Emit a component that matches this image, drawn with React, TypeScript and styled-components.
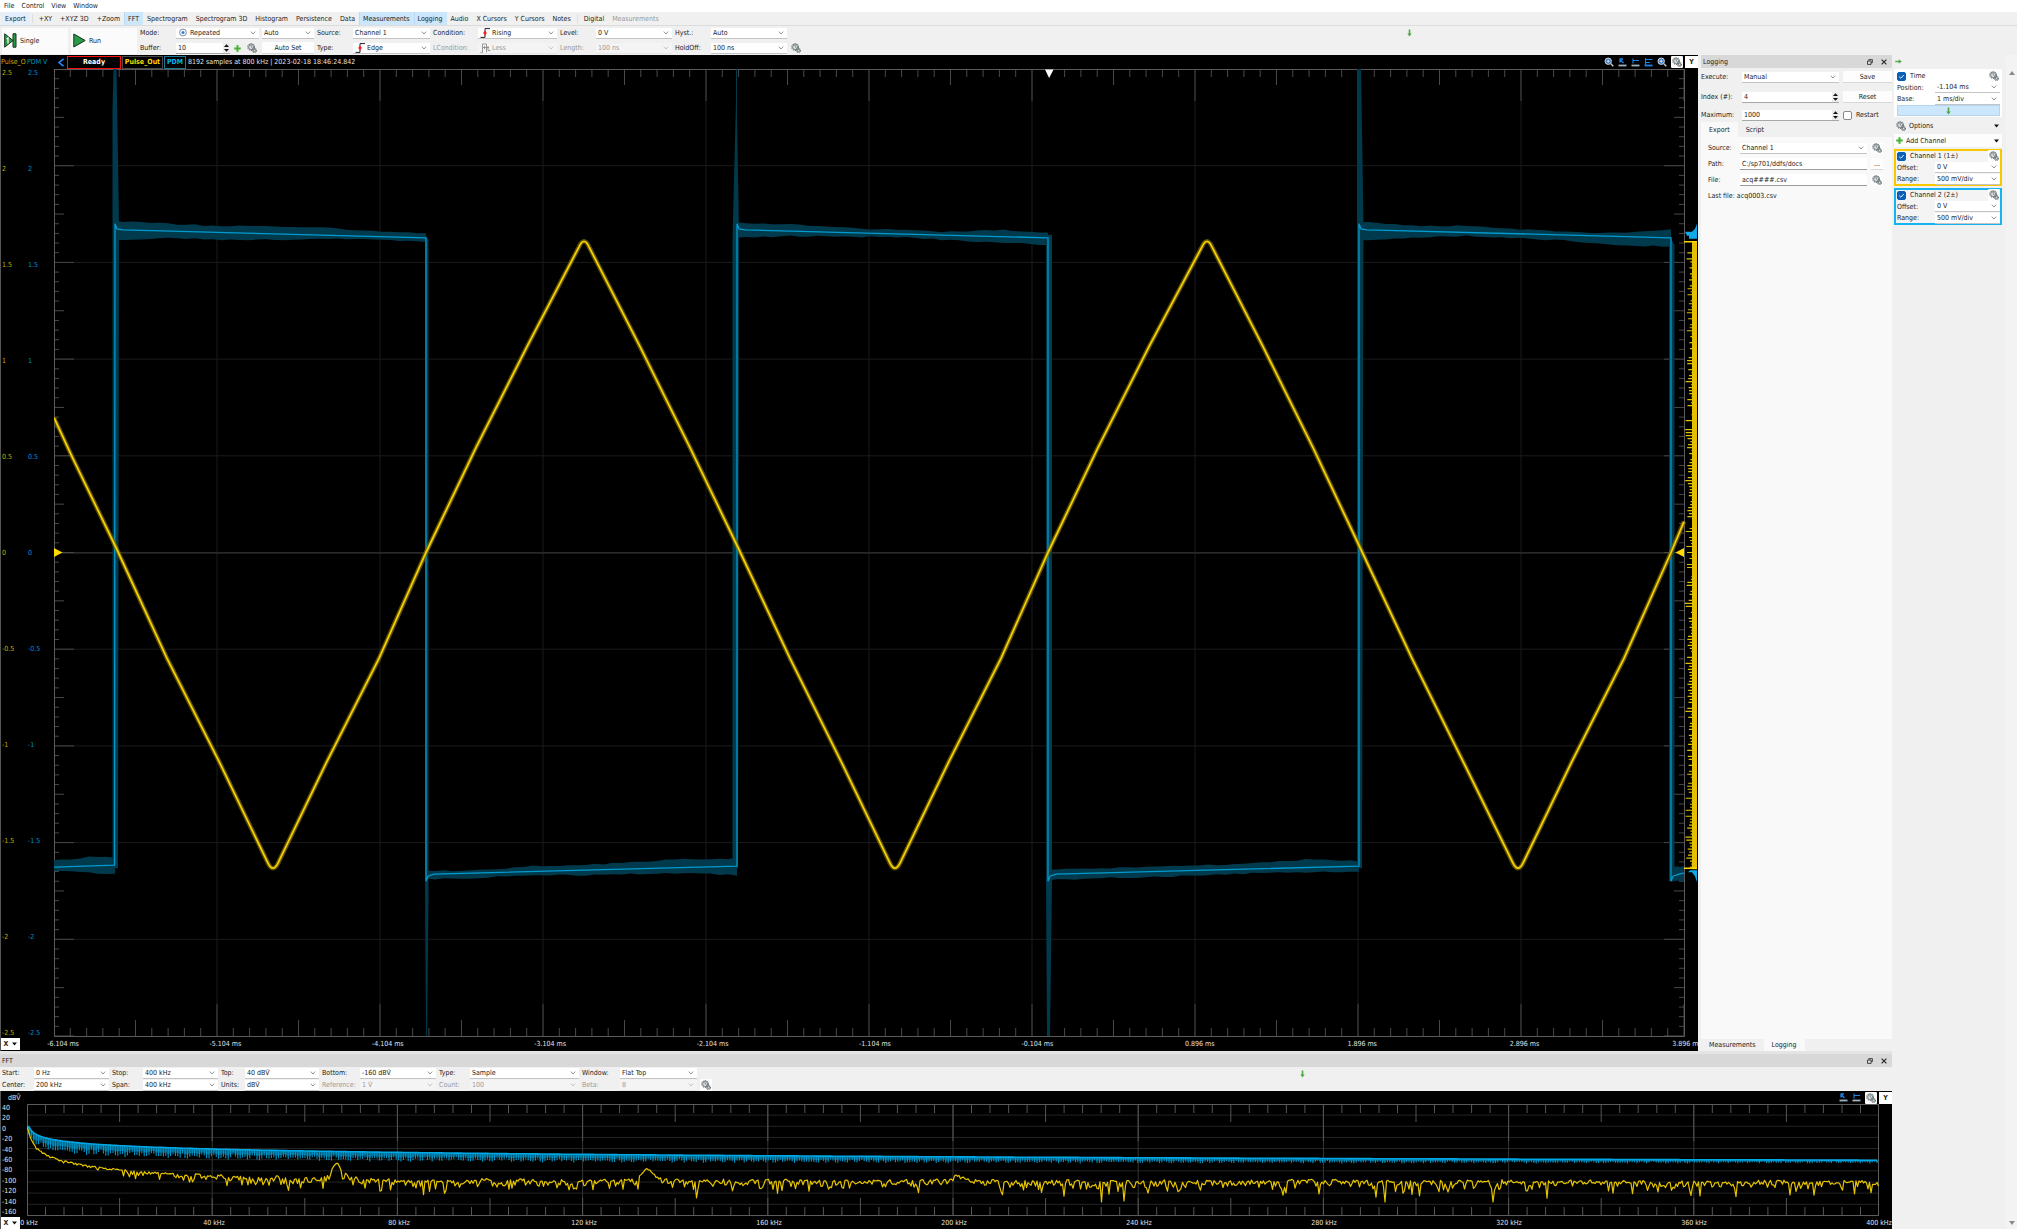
import React from "react";
import styled, { createGlobalStyle } from "styled-components";

const YELLOW = "#ffd800";
const BLUE = "#00b4f0";

const Global = createGlobalStyle`
  *, *::before, *::after { box-sizing: border-box; }
  html, body { margin: 0; padding: 0; }
  body, button, input, select, textarea {
    font-family: "DejaVu Sans Condensed", "Open Sans", "Noto Sans", sans-serif;
    font-size: 7px;
    line-height: 8px;
    color: #1c1c1c;
  }
  button, input, select { margin: 0; padding: 0; border: 0; border-radius: 0; background: none; outline: none; }
  a { color: inherit; text-decoration: none; }
`;

/* ---------- shared parts ---------- */

const Page = styled.div`
  display: flex;
  flex-direction: column;
  height: 100vh;
  overflow: hidden;
  background: #f0f0f0;
`;

const SelectBox = styled.span<{ $off?: boolean }>`
  display: grid;
  grid-template-columns: auto minmax(0, 1fr) 12px;
  align-items: center;
  height: 11px;
  min-width: 0;
  padding-left: 2px;
  background: ${(p) => (p.$off ? "#f4f4f4" : "#fff")};
  border-bottom: 1px solid ${(p) => (p.$off ? "#e6e6e6" : "#c4c4c4")};
  & > select {
    grid-column: 2 / 4;
    grid-row: 1;
    width: 100%;
    height: 10px;
    appearance: none;
    color: ${(p) => (p.$off ? "#9a9a9a" : "#1c1c1c")};
    opacity: 1;
  }
  & > svg:last-child {
    grid-column: 3;
    grid-row: 1;
    justify-self: center;
    pointer-events: none;
  }
`;

const Label = styled.label<{ $off?: boolean }>`
  color: ${(p) => (p.$off ? "#9a9a9a" : "#1c1c1c")};
  white-space: nowrap;
`;

function Picker(p: { id: string; value: string; off?: boolean; icon?: React.ReactNode }) {
  return (
    <SelectBox $off={p.off}>
      {p.icon}
      <select id={p.id} disabled={p.off} defaultValue={p.value} aria-label={p.id}>
        <option>{p.value}</option>
      </select>
      <svg width="6" height="4" viewBox="0 0 6 4" fill="none" stroke={p.off ? "#b8b8b8" : "#777"} strokeWidth="0.8">
        <path d="M.8.6 3 3 5.2.6" />
      </svg>
    </SelectBox>
  );
}

const SpinBox = styled.span`
  display: flex;
  align-items: center;
  height: 11px;
  min-width: 0;
  padding-left: 2px;
  background: #fff;
  border-bottom: 1px solid #a8a8a8;
  & > input {
    flex: 1;
    min-width: 0;
    height: 10px;
    appearance: textfield;
  }
  & > input::-webkit-inner-spin-button { appearance: none; margin: 0; }
`;

const Stepper = styled.svg`
  flex: none;
  background: #ececec;
`;

function Spin({ id, value }: { id: string; value: number }) {
  return (
    <SpinBox>
      <input id={id} type="number" defaultValue={value} aria-label={id} />
      <Stepper width="7" height="10" viewBox="0 0 7 10" fill="#111">
        <path d="M1 4 3.5 1.2 6 4zM1 6 3.5 8.8 6 6z" />
      </Stepper>
    </SpinBox>
  );
}

const PlainButton = styled.button`
  display: flex;
  align-items: center;
  justify-content: center;
  height: 12px;
  background: #fdfdfd;
  border-bottom: 1px solid #d8d8d8;
`;

const GearButton = styled.button<{ $plain?: boolean }>`
  display: flex;
  align-items: center;
  justify-content: center;
  flex: none;
  width: 12px;
  height: 12px;
  background: ${(p) => (p.$plain ? "none" : "#fdfdfd")};
  border-radius: 1px;
`;

function Gear({ size = 10 }: { size?: number }) {
  return (
    <svg width={size} height={size} viewBox="0 0 12 12" fill="none">
      <circle cx="5" cy="4.8" r="3.9" stroke="#6d7678" strokeWidth="1.6" strokeDasharray="1.5 .95" />
      <circle cx="5" cy="4.8" r="3" stroke="#7d8689" strokeWidth="1.2" fill="#dfe5e6" />
      <path d="M5 4.8V2.4M5 4.8l2 1.4" stroke="#596164" strokeWidth=".8" />
      <circle cx="9" cy="9" r="2.2" stroke="#4a5255" strokeWidth="1.3" strokeDasharray="1.1 .6" />
      <circle cx="9" cy="9" r="1.4" fill="#d5dbdc" stroke="#5d6669" strokeWidth=".8" />
    </svg>
  );
}

function GearBtn({ label, plain }: { label: string; plain?: boolean }) {
  return (
    <GearButton aria-label={label} $plain={plain}>
      <Gear />
    </GearButton>
  );
}

const Plus = () => (
  <svg width="7" height="7" viewBox="0 0 7 7">
    <path d="M2.5.3h2v2.2h2.2v2H4.5v2.2h-2V4.5H.3v-2h2.2z" fill="#46b035" stroke="#8ed07f" strokeWidth=".4" />
  </svg>
);

const DownArrow = () => (
  <svg width="5" height="8" viewBox="0 0 5 8">
    <path d="M1.7.5h1.6v4h1.4L2.5 7.5.3 4.5h1.4z" fill="#4fa848" />
  </svg>
);

const Caret = () => (
  <svg width="5" height="4" viewBox="0 0 5 4">
    <path d="M0 .5h5L2.5 3.6z" fill="#111" />
  </svg>
);

const DockTitle = styled.header`
  display: flex;
  align-items: center;
  gap: 6px;
  flex: none;
  height: 13px;
  padding: 0 4px 0 2px;
  background: #d8d8d8;
  & > span { flex: 1; }
  & > button { display: flex; align-items: center; justify-content: center; width: 8px; height: 8px; }
`;

function Dock({ title }: { title: string }) {
  return (
    <DockTitle>
      <span>{title}</span>
      <button aria-label={`Float ${title}`}>
        <svg width="6" height="6" viewBox="0 0 6 6" fill="none" stroke="#222" strokeWidth=".8">
          <path d="M1.8 1.8V.6h3.6v3H4.2M.5 2h3.6v3.4H.5z" />
        </svg>
      </button>
      <button aria-label={`Close ${title}`}>
        <svg width="6" height="6" viewBox="0 0 6 6" stroke="#222" strokeWidth="1.1">
          <path d="M.6.6l4.8 4.8M5.4.6.6 5.4" />
        </svg>
      </button>
    </DockTitle>
  );
}

/* ---------- menus and top toolbar ---------- */

const MenuBar = styled.nav`
  display: flex;
  align-items: center;
  gap: 7px;
  flex: none;
  height: 12px;
  padding-left: 4px;
  background: #fff;
`;

const ViewBar = styled.div`
  display: flex;
  align-items: stretch;
  flex: none;
  height: 14px;
  padding-left: 1px;
  border-bottom: 1px solid #dcdcdc;
`;

const ViewButton = styled.button<{ $on?: boolean; $hint?: boolean; $off?: boolean }>`
  padding: 0 4px;
  white-space: nowrap;
  background: ${(p) => (p.$on ? "#cce6fb" : p.$hint ? "#e3f0fb" : "none")};
  color: ${(p) => (p.$off ? "#9a9a9a" : "#1c1c1c")};
  box-shadow: inset ${(p) => (p.$on ? 1 : 0)}px 0 #b9daf4;
`;

const Divider = styled.i`
  width: 1px;
  margin: 2px 2px;
  background: #dedede;
`;

const ControlBar = styled.div`
  display: flex;
  align-items: center;
  flex: none;
  height: 29px;
  padding: 0 0 0 2px;
`;

const BigButton = styled.button`
  display: flex;
  align-items: center;
  gap: 3px;
  width: 66px;
  height: 26px;
  margin-right: 3px;
  padding: 0 2px;
  background: #fbfbfb;
`;

const Settings = styled.div<{ $cols: string; $row: number }>`
  display: grid;
  grid-template-columns: ${(p) => p.$cols};
  grid-auto-rows: ${(p) => p.$row}px;
  align-items: center;
  flex: none;
  column-gap: 3px;
`;

const BufferCell = styled.div`
  display: grid;
  grid-template-columns: 54px 1fr 1fr;
  align-items: center;
  justify-items: center;
  & > :first-child { width: 100%; }
`;

const BarHint = styled.div`
  display: flex;
  flex: 1;
  justify-content: center;
  align-self: flex-start;
  padding-top: 3px;
`;

const RepeatIcon = () => (
  <svg width="12" height="9" viewBox="0 0 12 9" fill="none">
    <circle cx="5" cy="4.5" r="3.4" stroke="#6b7f96" strokeWidth=".9" />
    <circle cx="5" cy="4.5" r="1.6" fill="#3f7fd0" />
  </svg>
);

const EdgeIcon = () => (
  <svg width="12" height="10" viewBox="0 0 12 10" fill="none">
    <path d="M.5 9.4H5V.6h5" stroke="#222" strokeWidth="1" />
    <path d="M5 2.5 7.2 5.6H2.8z" fill="#ff1a1a" />
    <path d="M5 5v2.5" stroke="#ff1a1a" strokeWidth="1.2" />
  </svg>
);

const PulseIcon = () => (
  <svg width="12" height="10" viewBox="0 0 12 10" fill="none" stroke="#8f8f8f" strokeWidth=".9">
    <path d="M.5 9.400H2.500V1h4v8.400M3 4.500h6M4.500 3v3M8 3v4.500h2.500" />
  </svg>
);

const VIEWS: { name: string; on?: boolean; hint?: boolean; off?: boolean; bar?: boolean }[] = [
  { name: "Export", hint: true },
  { name: "+XY", bar: true },
  { name: "+XYZ 3D" },
  { name: "+Zoom" },
  { name: "FFT", on: true },
  { name: "Spectrogram" },
  { name: "Spectrogram 3D" },
  { name: "Histogram" },
  { name: "Persistence" },
  { name: "Data" },
  { name: "Measurements", on: true },
  { name: "Logging", on: true },
  { name: "Audio" },
  { name: "X Cursors" },
  { name: "Y Cursors" },
  { name: "Notes" },
  { name: "Digital", bar: true },
  { name: "Measurements", off: true },
];

function TopBars() {
  return (
    <>
      <MenuBar>
        {["File", "Control", "View", "Window"].map((m) => (
          <a key={m} href="#">{m}</a>
        ))}
      </MenuBar>
      <ViewBar>
        {VIEWS.map((v, i) => (
          <React.Fragment key={i}>
            {v.bar && <Divider />}
            <ViewButton $on={v.on} $hint={v.hint} $off={v.off} disabled={v.off}>{v.name}</ViewButton>
          </React.Fragment>
        ))}
      </ViewBar>
      <ControlBar>
        <BigButton>
          <svg width="13" height="15" viewBox="0 0 13 15">
            <path d="M.7.8 9 7.500.7 14.200z" fill="#2b9a48" stroke="#14301b" strokeWidth="1" />
            <path d="M9 .8h3v13.400H9z" fill="#2b9a48" stroke="#14301b" strokeWidth="1" />
            <path d="M2.600 6 4 5v5.500" stroke="#fff" strokeWidth="1.200" fill="none" />
          </svg>
          Single
        </BigButton>
        <BigButton>
          <svg width="13" height="15" viewBox="0 0 13 15">
            <path d="M.8 1 12.200 7.500.8 14z" fill="#2b9a48" stroke="#14301b" strokeWidth="1" />
          </svg>
          Run
        </BigButton>
        <Settings $row={15} $cols="33px 83px 52px 33px 77px 42px 79px 33px 76px 33px 76px 12px">
          <Label htmlFor="mode">Mode:</Label>
          <Picker id="mode" value="Repeated" icon={<RepeatIcon />} />
          <Picker id="run-mode" value="Auto" />
          <Label htmlFor="source">Source:</Label>
          <Picker id="source" value="Channel 1" />
          <Label htmlFor="condition">Condition:</Label>
          <Picker id="condition" value="Rising" icon={<EdgeIcon />} />
          <Label htmlFor="level">Level:</Label>
          <Picker id="level" value="0 V" />
          <Label htmlFor="hyst">Hyst.:</Label>
          <Picker id="hyst" value="Auto" />
          <span />
          <Label htmlFor="buffer">Buffer:</Label>
          <BufferCell>
            <Spin id="buffer" value={10} />
            <Plus />
            <GearBtn label="Buffer settings" plain />
          </BufferCell>
          <PlainButton>Auto Set</PlainButton>
          <Label htmlFor="type">Type:</Label>
          <Picker id="type" value="Edge" icon={<EdgeIcon />} />
          <Label htmlFor="lcondition" $off>LCondition:</Label>
          <Picker id="lcondition" value="Less" off icon={<PulseIcon />} />
          <Label htmlFor="length" $off>Length:</Label>
          <Picker id="length" value="100 ns" off />
          <Label htmlFor="holdoff">HoldOff:</Label>
          <Picker id="holdoff" value="100 ns" />
          <GearBtn label="Trigger settings" plain />
        </Settings>
        <BarHint><DownArrow /></BarHint>
      </ControlBar>
    </>
  );
}

/* ---------- scope ---------- */

const Workspace = styled.div`
  display: flex;
  flex: 1;
  min-height: 0;
`;

const Main = styled.main`
  display: flex;
  flex-direction: column;
  flex: 1;
  min-width: 0;
`;

const TopRow = styled.div`
  display: flex;
  flex: 1;
  min-height: 0;
  gap: 3px;
`;

const Scope = styled.section`
  display: grid;
  grid-template-columns: 53px minmax(0, 1fr);
  grid-template-rows: 14px minmax(0, 1fr) 14px;
  flex: 1;
  min-width: 0;
  overflow: hidden;
  background: #000;
  color: #e2e2e2;
  border-left: 1px solid #555;
`;

const AxisNames = styled.div`
  display: grid;
  grid-template-columns: 26px 1fr;
  align-items: center;
  white-space: nowrap;
`;

const Tint = styled.span<{ $c: string }>`
  color: ${(p) => p.$c};
`;

const ScopeHead = styled.div`
  display: flex;
  align-items: center;
  gap: 1px;
  padding-left: 3px;
  white-space: nowrap;
  & > p { margin: 0 auto 0 1px; }
`;

const Tag = styled.span<{ $c: string; $edge: string; $w: number }>`
  display: flex;
  align-items: center;
  justify-content: center;
  width: ${(p) => p.$w}px;
  height: 13px;
  font-weight: 700;
  color: ${(p) => p.$c};
  border: 1px solid ${(p) => p.$edge};
`;

const HeadTools = styled.div`
  display: flex;
  align-items: center;
  gap: 4px;
`;

const AxisButton = styled.button<{ $w: number }>`
  display: flex;
  align-items: center;
  justify-content: center;
  gap: 4px;
  flex: none;
  width: ${(p) => p.$w}px;
  height: 12px;
  font-weight: 700;
  background: #fff;
`;

const ToolPair = styled.div`
  display: flex;
  gap: 2px;
`;

const YLabels = styled.div`
  display: grid;
  grid-template-columns: 26px 1fr;
  & > div {
    display: flex;
    flex-direction: column;
    justify-content: space-between;
    padding-left: 1px;
  }
`;

const Plot = styled.svg`
  display: block;
  width: 100%;
  height: 100%;
`;

const XAxis = styled.div`
  grid-column: 1 / -1;
  display: flex;
  align-items: center;
`;

/* Each label is a zero-width cell, so its text is centred on its division. */
const XTicks = styled.div<{ $from: number; $to: number }>`
  display: flex;
  flex: 1;
  justify-content: space-between;
  margin: 0 ${(p) => p.$to}px 0 ${(p) => p.$from}px;
  white-space: nowrap;
  & > span {
    display: flex;
    justify-content: center;
    width: 0;
  }
`;

const Magnifier = () => (
  <svg width="10" height="10" viewBox="0 0 10 10" fill="none">
    <circle cx="4.2" cy="4.2" r="3.2" fill="#3f78b8" stroke="#c6d6e6" strokeWidth="1" />
    <path d="M6.800 6.800 9.300 9.300" stroke="#c9c9c9" strokeWidth="1.4" />
    <path d="M4.200 2.600v3.200M2.600 4.200h3.200" stroke="#fff" strokeWidth=".7" />
  </svg>
);

const CursorIcon = ({ kind }: { kind: 0 | 1 | 2 }) => (
  <svg width="9" height="9" viewBox="0 0 9 9" fill="none">
    {kind === 0 && <path d="M2 1.500 5.500 5M1.500 1h3.500M2 1v3.500" stroke="#1c83e6" strokeWidth="1.3" />}
    {kind === 1 && <path d="M2 .5v5M2 2.500h6" stroke="#1c83e6" strokeWidth="1.1" />}
    {kind === 2 && <path d="M1.500 0v8M2 1.500h6.500M2 4.500h4" stroke="#1c83e6" strokeWidth="1.1" />}
    <path d="M.5 7.500h8" stroke={kind === 2 ? "#1c83e6" : "#9fb0be"} strokeWidth="1.8" />
  </svg>
);

function makeRandom(seed: number) {
  let s = seed;
  return () => {
    s = (s * 1664525 + 1013904223) % 4294967296;
    return s / 4294967296;
  };
}

const range = (n: number) => Array.from({ length: n }, (_, i) => i);

interface Band { x0: number; x1: number; y0: number; y1: number; top: number[]; bottom: number[] }

const BANDS: Band[] = [
  { x0: 54, x1: 115, y0: 868, y1: 866, top: [861, 860, 857, 859], bottom: [872, 873, 874, 875] },
  { x0: 115, x1: 426, y0: 229, y1: 238, top: [221, 224, 226, 226, 228, 231, 234], bottom: [240, 238, 240, 240, 239, 240, 242] },
  { x0: 426, x1: 737, y0: 876, y1: 867, top: [872, 871, 867, 866, 863, 860, 859], bottom: [880, 879, 876, 876, 875, 874, 876] },
  { x0: 737, x1: 1048, y0: 229, y1: 238, top: [223, 224, 228, 230, 232, 230, 233], bottom: [238, 236, 237, 237, 240, 243, 245] },
  { x0: 1048, x1: 1359, y0: 876, y1: 867, top: [871, 869, 868, 866, 864, 860, 862], bottom: [881, 879, 878, 876, 874, 873, 873] },
  { x0: 1359, x1: 1671, y0: 229, y1: 238, top: [222, 226, 226, 229, 232, 233, 230], bottom: [241, 238, 236, 238, 241, 245, 247] },
  { x0: 1671, x1: 1684, y0: 876, y1: 874, top: [867, 867], bottom: [882, 882] },
];

function bandPath(b: Band, rnd: () => number) {
  const steps = Math.max(4, Math.round((b.x1 - b.x0) / 9));
  const at = (arr: number[], t: number) => {
    const f = t * (arr.length - 1);
    const i = Math.min(arr.length - 2, Math.floor(f));
    return arr[i] + (arr[i + 1] - arr[i]) * (f - i) + (rnd() - 0.5) * 1.4;
  };
  const xs = range(steps + 1).map((i) => i / steps);
  const up = xs.map((t) => `${(b.x0 + t * (b.x1 - b.x0)).toFixed(1)} ${at(b.top, t).toFixed(1)}`);
  const down = xs.map((t) => `${(b.x0 + t * (b.x1 - b.x0)).toFixed(1)} ${at(b.bottom, t).toFixed(1)}`).reverse();
  return `M${up.join("L")}L${down.join("L")}Z`;
}

const TRIANGLE =
  "M54 418L72 457L116 548L167 659L219 762L268 864Q273 874 278 864L327 762L379 659L426 553L476 448L527 347L579 247Q584 236 589 247L640 347L690 448L738 548L790 659L841 762L890 864Q895 874 900 864L949 762L1001 659L1048 553L1098 448L1149 347L1202 247Q1207 236 1212 247L1263 347L1313 448L1360 548L1412 659L1463 762L1513 864Q1518 874 1523 864L1572 762L1624 659L1671 553L1684 522";

function ScopePlot() {
  const rnd = makeRandom(7);
  const DX = 163;
  const DY = 96.8;
  const square =
    "M54 868L114.500 866" +
    BANDS.slice(1).map((b) => {
      const high = b.y0 < 500;
      return `L${b.x0} ${high ? 224 : 882}L${b.x0 + 2} ${high ? 229 : 877}L${b.x0 + 8} ${b.y0 + (high ? 1 : -1)}L${b.x1} ${b.y1}`;
    }).join("");
  const hist = range(209)
    .map((i) => {
      const y = 244 + i * 3;
      const r = rnd();
      const x = r > 0.85 ? 1685 + rnd() * 3 : 1687 + rnd() * 6;
      return `M${x.toFixed(1)} ${y}H1697`;
    })
    .join("");
  return (
    <Plot viewBox="54 69 1644 969" preserveAspectRatio="none">
      <g stroke="#1b1b1b" strokeWidth="1">
        {range(9).map((i) => (
          <path key={i} d={`M${54 + DX * (i + 1)} 69V1037M54 ${(69 + DY * (i + 1)).toFixed(1)}H1684`} />
        ))}
      </g>
      <path d="M54 553.500H1684" stroke="#3a3a3a" />
      <path
        d={
          range(101).map((i) => {
            const x = 54 + i * 16.3;
            const l = i % 10 === 0 ? 32 : i % 5 === 0 ? 16 : 8;
            return `M${x.toFixed(1)} 69v${l}M${x.toFixed(1)} 1037v-${l}`;
          }).join("") +
          range(101).map((i) => {
            const y = 69 + i * 9.68;
            const l = i % 10 === 0 ? 20 : i % 5 === 0 ? 10 : 5;
            return `M54 ${y.toFixed(1)}h${l}M1684 ${y.toFixed(1)}h-${l}`;
          }).join("")
        }
        stroke="#484848"
      />
      <path d="M54 69.500H1684.500V1037.500H54.500V69" fill="none" stroke="#5c5c5c" />

      <g fill="#003a4c">
        {BANDS.map((b, i) => <path key={i} d={bandPath(b, rnd)} />)}
        <path d="M112.500 869V110L113.500 69h3L119 222V240L118 869z" />
        <path d="M425 235V882L426 1037h1L428.500 900V240z" />
        <path d="M732.500 869V240L736 100V69h1V120L739 230 738 869z" />
        <path d="M1046 235V882L1047 1037h3L1052 880V235z" />
        <path d="M1357 869V69h4L1363.500 222V240L1362 869z" />
        <path d="M1669 235V882h5.500V245z" />
      </g>
      <path d={square} fill="none" stroke="#009bd0" strokeWidth="1.3" />
      <path d={TRIANGLE} fill="none" stroke="#7a6700" strokeWidth="4.6" opacity=".75" />
      <path d={TRIANGLE} fill="none" stroke="#f5d000" strokeWidth="1.8" />

      <path d={hist} stroke="#e3bf00" strokeWidth="1.2" />
      <path d="M1692 242H1697V870H1692z" fill="#e3bf00" />
      <path d="M1684 242H1697M1684 869H1697" stroke={YELLOW} strokeWidth="1.5" />
      <path d="M1697 224V239H1689V236H1687L1685 232H1692L1695 229zM1697 883V871H1690L1688 873H1692L1695 877z" fill="#10a8e8" />
      <path d="M54 548.500 62.500 553 54 557.500zM1684 548.500 1675.500 553 1684 557.500z" fill={YELLOW} />
      <path d="M1045 69.500h8.500L1049.200 78z" fill="#fff" />
    </Plot>
  );
}

const VOLTS = ["2.5", "2", "1.5", "1", "0.5", "0", "-0.5", "-1", "-1.5", "-2", "-2.5"];
const TIMES = ["-6.104 ms", "-5.104 ms", "-4.104 ms", "-3.104 ms", "-2.104 ms", "-1.104 ms", "-0.104 ms", "0.896 ms", "1.896 ms", "2.896 ms", "3.896 ms"];

function ScopeView() {
  return (
    <Scope>
      <AxisNames>
        <Tint $c="#c9a900">Pulse_O</Tint>
        <Tint $c="#0090c0">PDM V</Tint>
      </AxisNames>
      <ScopeHead>
        <svg width="9" height="9" viewBox="0 0 9 9" fill="none" stroke="#2f86ff" strokeWidth="1.6">
          <path d="M6.500.8 2 4.500l4.500 3.700" />
        </svg>
        <Tag $c="#fff" $edge="#ff1010" $w={54}>Ready</Tag>
        <Tag $c={YELLOW} $edge="#4a4a4a" $w={41}>Pulse_Out</Tag>
        <Tag $c={BLUE} $edge="#1c7896" $w={22}>PDM</Tag>
        <p>8192 samples at 800 kHz | 2023-02-18 18:46:24.842</p>
        <HeadTools>
          <Magnifier />
          <CursorIcon kind={0} />
          <CursorIcon kind={1} />
          <CursorIcon kind={2} />
          <Magnifier />
          <ToolPair>
            <GearBtn label="Plot settings" />
            <AxisButton $w={13}>Y</AxisButton>
          </ToolPair>
        </HeadTools>
      </ScopeHead>
      <YLabels>
        {["#c9a900", "#0090c0"].map((c) => (
          <div key={c}>
            {VOLTS.map((v) => <Tint key={v} $c={c}>{v}</Tint>)}
          </div>
        ))}
      </YLabels>
      <ScopePlot />
      <XAxis>
        <AxisButton $w={19}>X <Caret /></AxisButton>
        <XTicks $from={43} $to={11}>
          {TIMES.map((t) => <span key={t}>{t}</span>)}
        </XTicks>
      </XAxis>
    </Scope>
  );
}

/* ---------- logging dock ---------- */

const LogPanel = styled.aside`
  display: flex;
  flex-direction: column;
  flex: none;
  width: 191px;
`;

const LogForm = styled.div`
  display: grid;
  grid-template-columns: 37px minmax(0, 1fr) 49px;
  grid-template-rows: 18px 22px 14px;
  align-items: center;
  column-gap: 4px;
  flex: none;
`;

const Check = styled.label`
  display: flex;
  align-items: center;
  gap: 4px;
`;

const TickBox = styled.span`
  display: grid;
  place-items: center;
  flex: none;
  width: 9px;
  height: 9px;
  & > * { grid-area: 1 / 1; }
  & > svg { visibility: hidden; pointer-events: none; }
  & > input {
    appearance: none;
    width: 9px;
    height: 9px;
    background: #fff;
    border: 1px solid #8a8a8a;
    border-radius: 2px;
  }
  & > input:checked { background: #0a5fb8; border-color: #0a5fb8; }
  & > input:checked + svg { visibility: visible; }
`;

function Tick({ on }: { on?: boolean }) {
  return (
    <TickBox>
      <input type="checkbox" defaultChecked={on} />
      <svg width="7" height="7" viewBox="0 0 7 7" fill="none" stroke="#fff" strokeWidth=".9">
        <path d="M1.200 3.600 2.800 5.200 5.800 2" />
      </svg>
    </TickBox>
  );
}

const Tabs = styled.div<{ $h: number }>`
  display: flex;
  flex: none;
  height: ${(p) => p.$h}px;
`;

const Tab = styled.button<{ $on?: boolean }>`
  padding: 0 8px;
  background: ${(p) => (p.$on ? "#f9f9f9" : "#f0f0f0")};
`;

const TabPane = styled.div`
  flex: 1;
  min-height: 0;
  background: #f9f9f9;
`;

const ExportForm = styled.div`
  display: grid;
  grid-template-columns: 28px minmax(0, 1fr) 12px;
  grid-auto-rows: 16px;
  align-items: center;
  column-gap: 4px;
  padding: 3px 9px 0 7px;
`;

const TextField = styled.input`
  height: 12px;
  min-width: 0;
  padding-left: 2px;
  background: #fff;
  border-bottom: 1px solid #9c9c9c;
`;

const LastFile = styled.p`
  grid-column: 1 / 4;
  margin: 0;
`;

function LoggingDock() {
  return (
    <LogPanel>
      <Dock title="Logging" />
      <LogForm>
        <Label htmlFor="execute">Execute:</Label>
        <Picker id="execute" value="Manual" />
        <PlainButton>Save</PlainButton>
        <Label htmlFor="index">Index (#):</Label>
        <Spin id="index" value={4} />
        <PlainButton>Reset</PlainButton>
        <Label htmlFor="maximum">Maximum:</Label>
        <Spin id="maximum" value={1000} />
        <Check><Tick /> Restart</Check>
      </LogForm>
      <Tabs $h={15}>
        <Tab $on>Export</Tab>
        <Tab>Script</Tab>
      </Tabs>
      <TabPane>
        <ExportForm>
          <Label htmlFor="log-source">Source:</Label>
          <Picker id="log-source" value="Channel 1" />
          <GearBtn label="Source settings" />
          <Label htmlFor="path">Path:</Label>
          <TextField id="path" defaultValue="C:/sp701/ddfs/docs" />
          <PlainButton>...</PlainButton>
          <Label htmlFor="file">File:</Label>
          <TextField id="file" defaultValue="acq####.csv" />
          <GearBtn label="File settings" />
          <LastFile>Last file: acq0003.csv</LastFile>
        </ExportForm>
      </TabPane>
      <Tabs $h={12}>
        <Tab>Measurements</Tab>
        <Tab $on>Logging</Tab>
      </Tabs>
    </LogPanel>
  );
}

/* ---------- FFT dock ---------- */

const FftDock = styled.section`
  display: flex;
  flex-direction: column;
  flex: none;
  height: 178px;
  border-top: 3px solid #e4e4e4;
`;

const FftControls = styled.div`
  display: flex;
  flex: none;
  padding-left: 2px;
`;

const FftPlotArea = styled.div`
  display: grid;
  grid-template-columns: 26px minmax(0, 1fr) 13px;
  grid-template-rows: 13px minmax(0, 1fr) 13px;
  flex: 1;
  min-height: 0;
  overflow: hidden;
  background: #000;
  color: #e2e2e2;
  border-left: 1px solid #555;
`;

const FftHead = styled.div`
  grid-column: 1 / 4;
  display: flex;
  align-items: center;
  justify-content: space-between;
  padding-left: 7px;
`;

const FftY = styled.div`
  display: flex;
  flex-direction: column;
  justify-content: space-between;
  padding-left: 1px;
`;

const FREQS = range(11).map((i) => `${i * 40} kHz`);
const LEVELS = range(11).map((i) => `${40 - i * 20}`);

function FftPlot() {
  const rnd = makeRandom(42);
  const top = (x: number) => Math.max(1126, 1149 + 11.2 * Math.log10(Math.max(x - 27, 1) / 185));

  let crest = "M27 1126";
  let teeth = "";
  let body = "";
  for (let x = 29; x < 1879; x += 2.4) {
    const t = (x - 27) / 1852;
    const y = top(x);
    const depth = 12.5 - 9.5 * Math.pow(t, 0.6);
    const len = depth * (0.45 + 0.3 * Math.abs(Math.sin(x * 0.31)) + 0.3 * rnd());
    crest += `L${x.toFixed(1)} ${y.toFixed(1)}`;
    teeth += `M${x.toFixed(1)} ${y.toFixed(1)}v${len.toFixed(1)}`;
    body += `M${x.toFixed(1)} ${y.toFixed(1)}v${(len * 0.6).toFixed(1)}`;
  }

  let noise = "M27 1127";
  let a = 0.7;
  let b = 0.7;
  for (let x = 29; x < 1879; x += 1.5) {
    a = a * 0.5 + (rnd() + rnd() + rnd() - 1.5) * 1.3;
    b = b * 0.5 + (rnd() + rnd() + rnd() - 1.5) * 1.3;
    const mag = Math.max(0.04, Math.sqrt(a * a + b * b));
    let gain = Math.min(1, 0.12 + Math.pow((x - 27) / 260, 1.3));
    let y = Math.min(1148 + 22.5 * Math.log10(Math.max(x - 27, 1.2) / 10), 1181 + (2 * x) / 1879);
    for (const [c, h] of [[337, 18], [647, 13], [957, 7]]) {
      const k = 1 / (1 + Math.pow((x - c) / 7, 2));
      y -= h * k;
      gain *= 1 - 0.75 * k;
    }
    const raw = -Math.log(mag);
    y += (raw > 0 ? 6.5 * raw : 3.5 * raw) * gain;
    noise += `L${x.toFixed(1)} ${Math.min(y, 1202).toFixed(1)}`;
  }

  return (
    <Plot viewBox="27 1104 1852 112" preserveAspectRatio="none">
      <path d={range(9).map((i) => `M27 ${(1115.1 + i * 11.15).toFixed(1)}H1879`).join("")} stroke="#242424" />
      <path d={range(9).map((i) => `M${(212.2 + i * 185.2).toFixed(1)} 1104V1216`).join("")} stroke="#363636" />
      <path
        d={range(101).map((i) => {
          const x = (27 + i * 18.52).toFixed(1);
          const l = i % 10 === 0 ? 37 : i % 5 === 0 ? 18 : 9;
          return `M${x} 1104v${l}M${x} 1216v-${Math.min(l, 18)}`;
        }).join("")}
        stroke="#555"
      />
      <path d="M27.500 1104.500H1878.500V1215.500H27.500z" fill="none" stroke="#5c5c5c" />
      <path d={body} stroke="#005f80" strokeWidth="2.4" />
      <path d={teeth} stroke="#0096c8" strokeWidth="1.1" />
      <path d={crest} fill="none" stroke="#00a8e6" strokeWidth="1.6" />
      <path d={noise} fill="none" stroke="#e6c400" strokeWidth="1.2" strokeLinejoin="round" />
    </Plot>
  );
}

function FftView() {
  return (
    <FftDock>
      <Dock title="FFT" />
      <FftControls>
        <Settings $row={12} $cols="29px 75px 28px 75px 21px 74px 35px 76px 28px 109px 35px 77px 12px">
          <Label htmlFor="start">Start:</Label><Picker id="start" value="0 Hz" />
          <Label htmlFor="stop">Stop:</Label><Picker id="stop" value="400 kHz" />
          <Label htmlFor="top">Top:</Label><Picker id="top" value="40 dBṼ" />
          <Label htmlFor="bottom">Bottom:</Label><Picker id="bottom" value="-160 dBṼ" />
          <Label htmlFor="fft-type">Type:</Label><Picker id="fft-type" value="Sample" />
          <Label htmlFor="window">Window:</Label><Picker id="window" value="Flat Top" />
          <span />
          <Label htmlFor="center">Center:</Label><Picker id="center" value="200 kHz" />
          <Label htmlFor="span">Span:</Label><Picker id="span" value="400 kHz" />
          <Label htmlFor="units">Units:</Label><Picker id="units" value="dBṼ" />
          <Label htmlFor="reference" $off>Reference:</Label><Picker id="reference" value="1 Ṽ" off />
          <Label htmlFor="count" $off>Count:</Label><Picker id="count" value="100" off />
          <Label htmlFor="beta" $off>Beta:</Label><Picker id="beta" value="8" off />
          <GearBtn label="FFT settings" />
        </Settings>
        <BarHint><DownArrow /></BarHint>
      </FftControls>
      <FftPlotArea>
        <FftHead>
          <span>dBṼ</span>
          <HeadTools>
            <CursorIcon kind={0} />
            <CursorIcon kind={1} />
            <ToolPair>
              <GearBtn label="FFT plot settings" />
              <AxisButton $w={13}>Y</AxisButton>
            </ToolPair>
          </HeadTools>
        </FftHead>
        <FftY>{LEVELS.map((l) => <span key={l}>{l}</span>)}</FftY>
        <FftPlot />
        <span />
        <XAxis>
          <AxisButton $w={19}>X <Caret /></AxisButton>
          <XTicks $from={9} $to={13}>{FREQS.map((f) => <span key={f}>{f}</span>)}</XTicks>
        </XAxis>
      </FftPlotArea>
    </FftDock>
  );
}

/* ---------- channel column ---------- */

const Side = styled.aside`
  display: flex;
  flex: none;
  width: 125px;
  padding-left: 2px;
`;

const SideBody = styled.div`
  display: flex;
  flex-direction: column;
  gap: 2px;
  width: 108px;
`;

const SideTop = styled.div`
  display: flex;
  align-items: center;
  height: 12px;
  padding-left: 1px;
`;

const Group = styled.section<{ $edge: string }>`
  display: grid;
  grid-template-columns: 38px minmax(0, 1fr);
  grid-template-rows: 12px 11px 12px;
  grid-auto-rows: 11px;
  align-items: center;
  padding: 0 1px 0 2px;
  background: ${(p) => (p.$edge === "#fff" ? "#fff" : "#f4f4f4")};
  border: 1px solid ${(p) => p.$edge};
  box-shadow: inset 0 0 0 ${(p) => (p.$edge === "#fff" ? 0 : 1)}px ${(p) => p.$edge};
`;

const GroupHead = styled.div`
  grid-column: 1 / 3;
  display: flex;
  align-items: center;
  justify-content: space-between;
`;

const FoldButton = styled.button`
  grid-column: 1 / 3;
  display: flex;
  align-items: center;
  justify-content: center;
  height: 11px;
  background: #cce6fb;
  border: 1px solid #b5d6f0;
`;

const MenuButton = styled.button<{ $bg: string }>`
  display: flex;
  align-items: center;
  gap: 3px;
  height: 13px;
  padding: 0 3px 0 2px;
  background: ${(p) => p.$bg};
  & > :last-child { margin-left: auto; }
`;

const ScrollRail = styled.div`
  display: flex;
  flex-direction: column;
  align-items: center;
  justify-content: space-between;
  width: 11px;
  margin-left: auto;
  padding: 16px 0 4px;
  background: #f3f3f3;
`;

function ChannelGroup(p: { name: string; edge: string; id: string }) {
  return (
    <Group $edge={p.edge}>
      <GroupHead>
        <Check><Tick on /> {p.name}</Check>
        <GearBtn label={`${p.name} settings`} />
      </GroupHead>
      <Label htmlFor={`${p.id}-offset`}>Offset:</Label>
      <Picker id={`${p.id}-offset`} value="0 V" />
      <Label htmlFor={`${p.id}-range`}>Range:</Label>
      <Picker id={`${p.id}-range`} value="500 mV/div" />
    </Group>
  );
}

function SideColumn() {
  return (
    <Side>
      <SideBody>
        <SideTop>
          <svg width="7" height="5" viewBox="0 0 7 5">
            <path d="M.3 1.700h3.500V.3L6.800 2.500 3.800 4.700V3.300H.3z" fill="#4fae45" />
          </svg>
        </SideTop>
        <Group $edge="#fff">
          <GroupHead>
            <Check><Tick on /> Time</Check>
            <GearBtn label="Time settings" />
          </GroupHead>
          <Label htmlFor="position">Position:</Label>
          <Picker id="position" value="-1.104 ms" />
          <Label htmlFor="base">Base:</Label>
          <Picker id="base" value="1 ms/div" />
          <FoldButton aria-label="More time settings"><DownArrow /></FoldButton>
        </Group>
        <MenuButton $bg="transparent"><Gear /><span>Options</span><Caret /></MenuButton>
        <MenuButton $bg="#fdfdfd"><Plus /><span>Add Channel</span><Caret /></MenuButton>
        <ChannelGroup name="Channel 1 (1±)" edge="#f5c800" id="ch1" />
        <ChannelGroup name="Channel 2 (2±)" edge="#14b4f0" id="ch2" />
      </SideBody>
      <ScrollRail>
        <svg width="6" height="4" viewBox="0 0 6 4"><path d="M0 4h6L3 0z" fill="#8a8a8a" /></svg>
        <svg width="6" height="4" viewBox="0 0 6 4"><path d="M0 0h6L3 4z" fill="#8a8a8a" /></svg>
      </ScrollRail>
    </Side>
  );
}

export default function App() {
  return (
    <Page>
      <Global />
      <TopBars />
      <Workspace>
        <Main>
          <TopRow>
            <ScopeView />
            <LoggingDock />
          </TopRow>
          <FftView />
        </Main>
        <SideColumn />
      </Workspace>
    </Page>
  );
}
